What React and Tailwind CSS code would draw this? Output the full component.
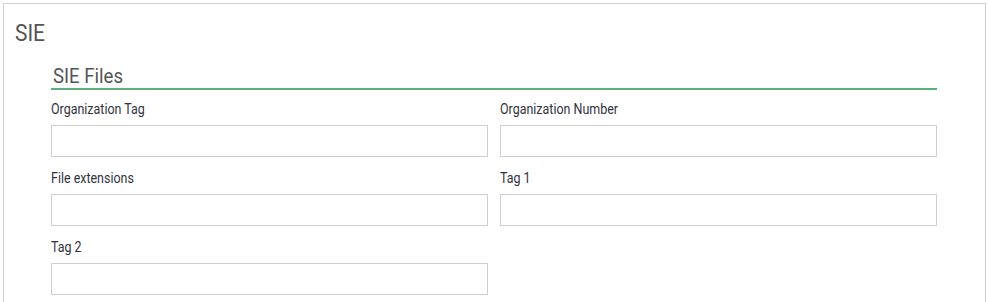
export default function App() {
  const fields = [
    { label: 'Organization Tag' },
    { label: 'Organization Number' },
    { label: 'File extensions' },
    { label: 'Tag 1' },
    { label: 'Tag 2' },
  ]

  return (
    <div className="bg-white w-[989px] h-[302px] overflow-hidden pt-[3px] pl-[3px]" style={{ fontFamily: 'Roboto, "Liberation Sans", sans-serif' }}>
      <div className="w-[983px] h-[320px] border border-[#d0d0d0] bg-white">
        {/* Header */}
        <h1 className="ml-[11px] mt-[17px] text-[23px] leading-[26px] text-[#555]">
          <span className="inline-block origin-left scale-x-[0.91]">SIE</span>
        </h1>

        <div className="ml-[47px] mr-[48px] mt-[17px]">
          <h2 className="pl-[2px] text-[20px] leading-[24px] text-[#555] border-b-2 border-[#5bb07a]">
            <span className="inline-block origin-left scale-x-[0.93]">SIE Files</span>
          </h2>

          {/* Fields */}
          <div className="grid grid-cols-2 gap-x-[12px] gap-y-[13px] mt-[11px]">
            {fields.map((f) => (
              <div key={f.label}>
                <label className="block text-[14px] leading-[16px] text-[#333340] mb-[8px] whitespace-nowrap">
                  <span className="inline-block origin-left scale-x-[0.89]">{f.label}</span>
                </label>
                <input
                  type="text"
                  className="block w-full h-[32px] border border-[#cfcfcf] bg-white outline-none px-2 text-sm"
                />
              </div>
            ))}
          </div>
        </div>
      </div>
    </div>
  )
}
